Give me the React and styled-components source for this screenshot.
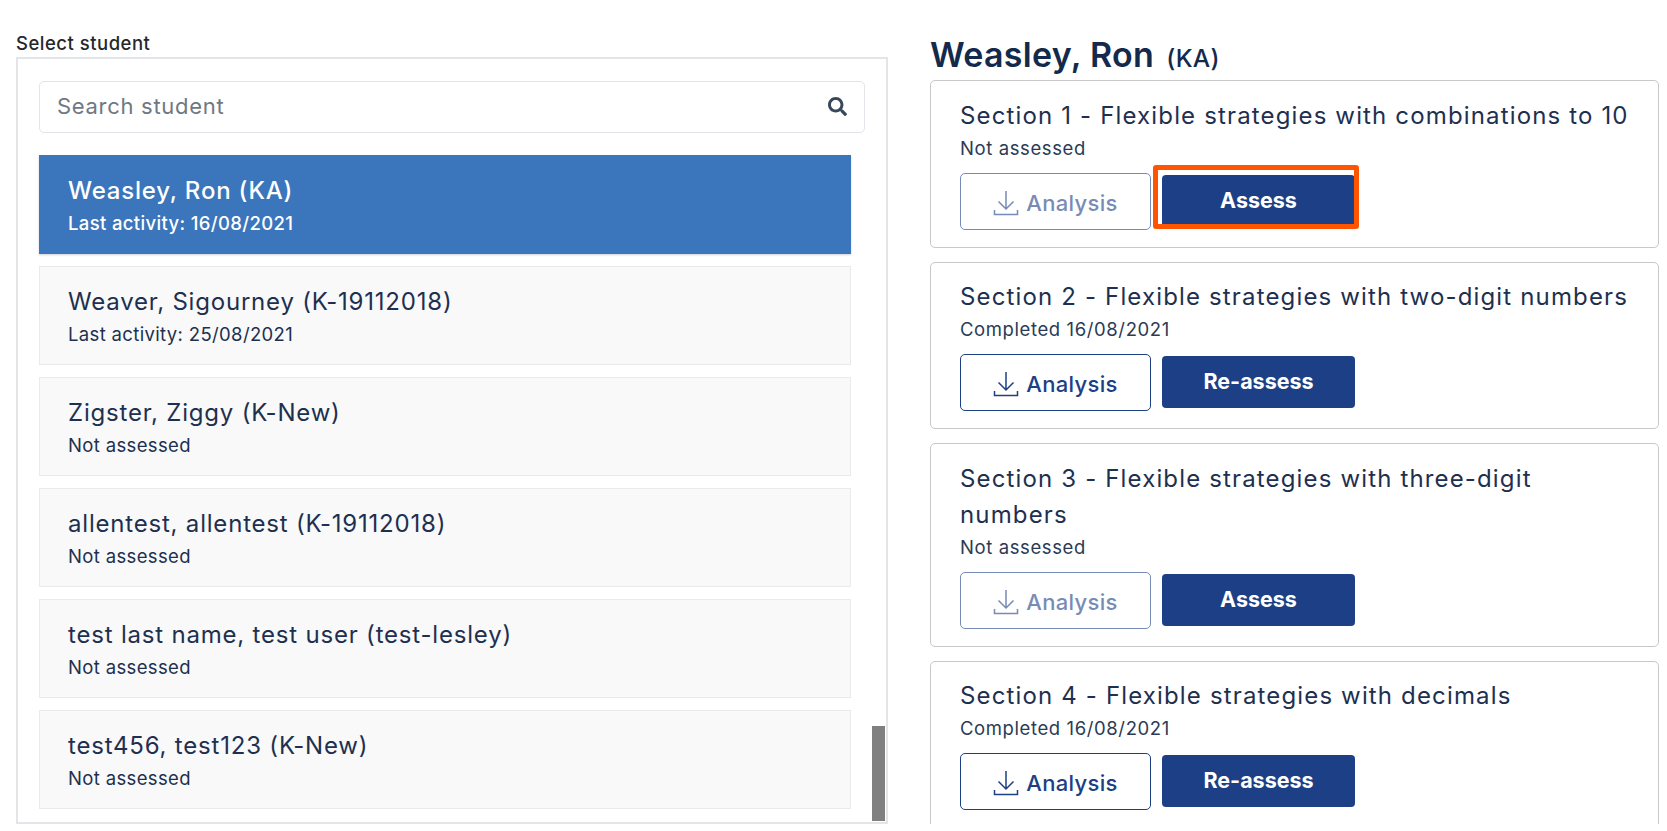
import React from "react";
import styled, { createGlobalStyle } from "styled-components";
import { FaSearch } from "react-icons/fa";

const GlobalStyle = createGlobalStyle`
  html, body {
    margin: 0;
    padding: 0;
    background: #fff;
    overflow: hidden;
    font-family: "Inter", "Liberation Sans", sans-serif;
    color: #1e3050;
  }
  * {
    box-sizing: border-box;
  }
`;

const Page = styled.div`
  display: flex;
  height: 831px;
  padding: 32px 7px 7px 16px;
  gap: 42px;
`;

const LeftColumn = styled.div`
  width: 872px;
  flex-shrink: 0;
  display: flex;
  flex-direction: column;
`;

const Label = styled.div`
  font-size: 18.5px;
  font-weight: 500;
  line-height: 22px;
  height: 25px;
  color: #24282e;
  letter-spacing: 0.5px;
`;

const ListPanel = styled.div`
  position: relative;
  height: 768px;
  border: 2px solid #e3e5e8;
  padding: 22px 21px 0;
  overflow: hidden;
`;

const SearchBox = styled.div`
  display: flex;
  height: 52px;
  border: 1.5px solid #e1e4e8;
  border-radius: 5px;
  margin-bottom: 22px;
`;

const SearchInput = styled.input`
  flex: 1;
  min-width: 0;
  border: none;
  outline: none;
  background: transparent;
  padding: 0 17px 2px;
  font-family: inherit;
  font-size: 22px;
  letter-spacing: 0.7px;
  color: #1e3050;
  &::placeholder {
    color: #6f7882;
    opacity: 1;
  }
`;

const SearchButton = styled.div`
  width: 54px;
  display: flex;
  align-items: center;
  justify-content: center;
  color: #39475a;
  font-size: 19px;
`;

const StudentList = styled.div`
  display: flex;
  flex-direction: column;
  gap: 12px;
  width: 812px;
`;

const StudentItem = styled.div`
  height: 99px;
  padding: 19.5px 28px 0;
  background: ${(p) => (p.$active ? "#3b75bb" : "#f9f9f9")};
  border: 1.5px solid ${(p) => (p.$active ? "#3b75bb" : "#e9eaec")};
  color: ${(p) => (p.$active ? "#fff" : "#1e3050")};
  box-shadow: ${(p) => (p.$active ? "0 1px 2px rgba(0,0,0,.18)" : "none")};
`;

const StudentName = styled.div`
  font-size: 24px;
  line-height: 32px;
  font-weight: ${(p) => (p.$active ? 500 : 400)};
  letter-spacing: 0.8px;
`;

const StudentNote = styled.div`
  font-size: 18.5px;
  line-height: 28px;
  margin-top: 1.5px;
  letter-spacing: 0.35px;
  font-weight: ${(p) => (p.$active ? 500 : 400)};
`;

const ScrollThumb = styled.div`
  position: absolute;
  right: 1px;
  bottom: 1px;
  width: 13px;
  height: 95px;
  background: #808080;
`;

const RightColumn = styled.div`
  width: 729px;
  flex-shrink: 0;
  height: 792px;
  overflow: hidden;
`;

const Heading = styled.h1`
  margin: 0;
  height: 48px;
  font-size: 34px;
  line-height: 46px;
  font-weight: 600;
  color: #142a4c;
  letter-spacing: 0.3px;
`;

const HeadingCode = styled.span`
  font-size: 24.5px;
  font-weight: 500;
  margin-left: 12px;
`;

const CardStack = styled.div`
  display: flex;
  flex-direction: column;
  gap: 14px;
`;

const Card = styled.div`
  position: relative;
  border: 1.5px solid #c8c8c8;
  border-radius: 5px;
  padding: 16.5px 18px 17px 29px;
`;

const CardTitle = styled.div`
  font-size: 24px;
  line-height: 36px;
  color: #1e3050;
  letter-spacing: 1.15px;
`;

const CardStatus = styled.div`
  font-size: 18.5px;
  line-height: 24px;
  margin-top: 2px;
  margin-bottom: 13px;
  letter-spacing: 0.6px;
  color: #2b3b55;
`;

const ButtonRow = styled.div`
  display: flex;
  align-items: flex-start;
  gap: 11px;
`;

const AnalysisButton = styled.div`
  width: 191px;
  height: 57px;
  display: flex;
  align-items: center;
  justify-content: center;
  gap: 7px;
  border: 1.5px solid #1c3f85;
  border-radius: 5px;
  color: #1c3f85;
  font-size: 22px;
  font-weight: 500;
  letter-spacing: 0.3px;
  padding-top: 3px;
  opacity: ${(p) => (p.$disabled ? 0.6 : 1)};
`;

const PrimaryButton = styled.div`
  position: relative;
  width: 193px;
  height: 52px;
  margin-top: 2px;
  padding-bottom: 2px;
  display: flex;
  align-items: center;
  justify-content: center;
  background: #1c3f85;
  border-radius: 4px;
  color: #fff;
  font-size: 21.500px;
  font-weight: 700;
`;

const Highlight = styled.div`
  position: absolute;
  left: -9px;
  top: -10px;
  width: 206px;
  height: 64px;
  border: 5px solid #ff5500;
  border-radius: 3px;
  pointer-events: none;
`;

const DownloadIcon = () => (
  <svg width="26" height="26" viewBox="0 0 26 26" fill="none" stroke="currentColor" strokeWidth="1.5">
    <path d="M13 1v18M5.500 11.500 13 19l7.500-7.500" />
    <path d="M1.500 20v4.500h23V20" />
  </svg>
);

const students = [
  { name: "Weasley, Ron (KA)", note: "Last activity: 16/08/2021", active: true },
  { name: "Weaver, Sigourney (K-19112018)", note: "Last activity: 25/08/2021" },
  { name: "Zigster, Ziggy (K-New)", note: "Not assessed" },
  { name: "allentest, allentest (K-19112018)", note: "Not assessed" },
  { name: "test last name, test user (test-lesley)", note: "Not assessed" },
  { name: "test456, test123 (K-New)", note: "Not assessed" },
];

const sections = [
  { title: "Section 1 - Flexible strategies with combinations to 10", status: "Not assessed", action: "Assess", marked: true },
  { title: "Section 2 - Flexible strategies with two-digit numbers", status: "Completed 16/08/2021", action: "Re-assess", done: true },
  { title: "Section 3 - Flexible strategies with three-digit numbers", status: "Not assessed", action: "Assess" },
  { title: "Section 4 - Flexible strategies with decimals", status: "Completed 16/08/2021", action: "Re-assess", done: true },
];

const App = () => {
  return (
    <Page>
      <GlobalStyle />
      <LeftColumn>
        <Label>Select student</Label>
        <ListPanel>
          <SearchBox>
            <SearchInput placeholder="Search student" readOnly />
            <SearchButton>
              <FaSearch />
            </SearchButton>
          </SearchBox>
          <StudentList>
            {students.map((s) => (
              <StudentItem key={s.name} $active={s.active}>
                <StudentName $active={s.active}>{s.name}</StudentName>
                <StudentNote $active={s.active}>{s.note}</StudentNote>
              </StudentItem>
            ))}
          </StudentList>
          <ScrollThumb />
        </ListPanel>
      </LeftColumn>
      <RightColumn>
        <Heading>
          Weasley, Ron<HeadingCode>(KA)</HeadingCode>
        </Heading>
        <CardStack>
          {sections.map((s) => (
            <Card key={s.title}>
              <CardTitle>{s.title}</CardTitle>
              <CardStatus>{s.status}</CardStatus>
              <ButtonRow>
                <AnalysisButton $disabled={!s.done}>
                  <DownloadIcon />
                  Analysis
                </AnalysisButton>
                <PrimaryButton>
                  {s.action}
                  {s.marked && <Highlight />}
                </PrimaryButton>
              </ButtonRow>
            </Card>
          ))}
        </CardStack>
      </RightColumn>
    </Page>
  );
};

export default App;
